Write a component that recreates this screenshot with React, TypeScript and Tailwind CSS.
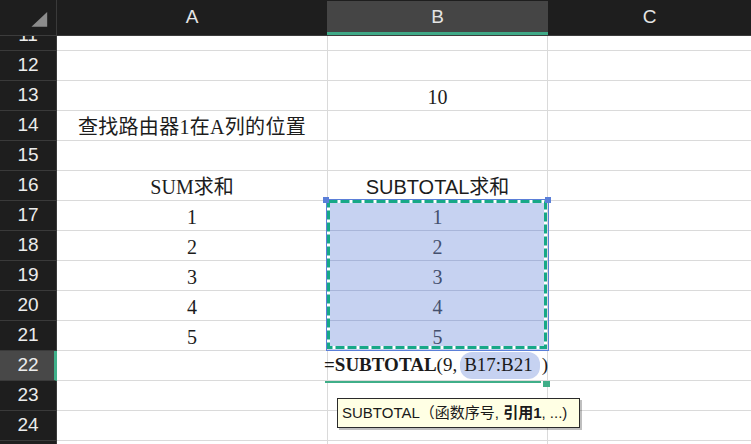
import React from "react";

const SERIF = "font-['Liberation_Serif','Noto_Sans_CJK_SC',serif]";
const SANS = "font-['Liberation_Sans','Noto_Sans_CJK_SC',sans-serif]";

interface Row {
  n: number;
  a?: string;
  b?: string;
  bSans?: boolean;
  sel?: boolean;
  active?: boolean;
}

const rows: Row[] = [
  { n: 11 },
  { n: 12 },
  { n: 13, b: "10" },
  { n: 14, a: "查找路由器1在A列的位置" },
  { n: 15 },
  { n: 16, a: "SUM求和", b: "SUBTOTAL求和", bSans: true },
  { n: 17, a: "1", b: "1", sel: true },
  { n: 18, a: "2", b: "2", sel: true },
  { n: 19, a: "3", b: "3", sel: true },
  { n: 20, a: "4", b: "4", sel: true },
  { n: 21, a: "5", b: "5", sel: true },
  { n: 22, active: true },
  { n: 23 },
  { n: 24 },
  { n: 25 },
];

function GridRow({ row, first }: { row: Row; first: boolean }) {
  return (
    <div className={`flex h-[30px] shrink-0 ${first ? "-mt-[15px]" : ""}`}>
      <div
        className={`w-[57px] shrink-0 flex items-center justify-center border-b border-[#3a3a3a] text-[19px] text-[#ececec] ${SANS} ${
          row.active
            ? "bg-[#484848] border-r-[3px] border-r-[#3fb08a] pl-[2px]"
            : "bg-[#1e1e1e] border-r border-r-[#3a3a3a]"
        }`}
      >
        {row.n}
      </div>
      <div
        className={`w-[271px] shrink-0 flex items-center justify-center pt-[2px] border-b border-r border-[#dadada] whitespace-nowrap text-[20px] text-[#1c1c1c] ${SERIF}`}
      >
        <span className={row.n === 14 ? "tracking-[0.3px]" : ""}>{row.a}</span>
      </div>
      <div
        className={`w-[220px] shrink-0 flex items-center justify-center pt-[2px] border-r border-[#dadada] whitespace-nowrap text-[20px] ${
          row.sel
            ? "bg-[#c6d2f1] border-b border-b-[#a9b6d9] text-[#44506e]"
            : "border-b text-[#1c1c1c]"
        } ${row.bSans ? SANS : SERIF}`}
      >
        {row.b}
      </div>
      <div className="flex-1 border-b border-[#dadada]" />
    </div>
  );
}

export default function App() {
  return (
    <div className="relative w-[751px] h-[444px] overflow-hidden bg-white flex flex-col">
      {/* ── Cabecera de columnas ── */}
      <div className={`flex h-[36px] shrink-0 bg-[#1e1e1e] border-b border-[#3c3c3c] text-[19px] text-[#e4e4e4] ${SANS}`}>
        <div className="w-[57px] shrink-0 border-r border-[#3a3a3a] flex items-center justify-center">
          <svg width="57" height="35" viewBox="0 0 57 35">
            <polygon points="48,12 48,27 32,27" fill="#8c8c8c" />
          </svg>
        </div>
        <div className="w-[270px] shrink-0 flex items-center justify-center">A</div>
        <div className="w-[221px] shrink-0 flex items-center justify-center bg-[#454545] border-b-[3px] border-[#3fa987] mt-[1px] pt-[2px]">
          B
        </div>
        <div className="flex-1 flex items-center justify-center">C</div>
      </div>

      {/* ── Filas ── */}
      <div className="flex-1 flex flex-col overflow-hidden">
        {rows.map((r, i) => (
          <GridRow key={r.n} row={r} first={i === 0} />
        ))}
      </div>

      {/* ── Selección B17:B21 ── */}
      <svg
        className="absolute left-[322px] top-[196px]"
        width="231"
        height="158"
        viewBox="0 0 231 158"
      >
        <rect x="4.5" y="3.5" width="222" height="151" fill="none" stroke="#5b7fd8" strokeWidth="1" />
        <rect x="6.5" y="5.5" width="217" height="146" fill="none" stroke="#ffffff" strokeWidth="3" />
        <rect
          x="6.5"
          y="5.5"
          width="217"
          height="146"
          fill="none"
          stroke="#17a887"
          strokeWidth="3"
          strokeDasharray="9 3"
        />
        <rect x="1" y="1" width="6" height="6" fill="#5b7fd8" />
        <rect x="223" y="1" width="6" height="6" fill="#5b7fd8" />
      </svg>

      {/* ── Fórmula en edición ── */}
      <div className={`absolute left-[324px] top-[351px] h-[29px] flex items-center whitespace-nowrap text-[19px] text-[#1a1a1a] ${SERIF}`}>
        <span className="font-bold">=SUBTOTAL</span>
        <span>(9,</span>
        <span className="ml-[3px] bg-[#c6d2f1] rounded-[12px] pl-[4px] pr-[7px] h-[27px] flex items-center">B17:B21</span>
        <span className="ml-[2px]">)</span>
      </div>
      <div className="absolute left-[325px] top-[381px] w-[216px] h-[2px] bg-[#3fae88]" />
      <div className="absolute left-[543px] top-[381px] w-[7px] h-[6px] bg-[#3fae88]" />

      {/* ── Ayuda de función ── */}
      <div
        className={`absolute left-[337px] top-[398px] w-[243px] h-[30px] border border-[#2a2a2a] bg-[#ffffe4] shadow-[2px_2px_0_rgba(0,0,0,0.25)] flex items-center pl-[4px] whitespace-pre text-[15px] text-[#1a1a1a] ${SANS}`}
      >
        {"SUBTOTAL（函数序号, "}
        <span className="font-bold">引用1</span>
        {", ...)"}
      </div>
    </div>
  );
}
